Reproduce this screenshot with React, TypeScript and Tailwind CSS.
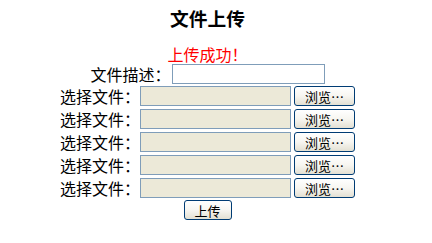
import React from "react";

const FONT = { fontFamily: '"SimSun", "Noto Sans CJK SC", "DejaVu Sans", sans-serif' };

const xpButton =
  "flex items-center justify-center rounded-[3px] border border-[#003c74] bg-gradient-to-b from-white via-[#f7f6f1] to-[#e3e0d3] text-[13px] leading-none text-black";

function FileRow() {
  return (
    <div className="flex h-[20px] items-center justify-center">
      <span className="w-[80px] text-[16px] leading-none text-black">选择文件：</span>
      <div className="h-[20px] w-[151px] border border-[#7f9db9] bg-[#ece9d8]" />
      <button type="button" className={`ml-[3px] h-[20px] w-[61px] ${xpButton}`}>
        浏览…
      </button>
    </div>
  );
}

export default function App() {
  return (
    <div className="h-[243px] w-[432px] overflow-hidden bg-white" style={FONT}>
      <div className="flex w-[415px] flex-col items-center">
        <h3 className="mt-[6px] h-[24px] text-[18.72px] font-bold leading-[24px] text-black">文件上传</h3>
        <p className="mt-[16px] h-[16px] text-[16px] leading-[16px] text-[#ff0000]">上传成功！</p>
        <div className="mt-[2px] flex h-[20px] items-center justify-center">
          <span className="w-[80px] text-[16px] leading-none text-black">文件描述：</span>
          <div className="ml-[1px] h-[20px] w-[153px] border border-[#7f9db9] bg-white" />
        </div>
        <div className="mt-[2px] flex flex-col gap-[3px]">
          <FileRow />
          <FileRow />
          <FileRow />
          <FileRow />
          <FileRow />
        </div>
        <button type="button" className={`mt-[2px] h-[20px] w-[48px] ${xpButton}`}>
          上传
        </button>
      </div>
    </div>
  );
}
